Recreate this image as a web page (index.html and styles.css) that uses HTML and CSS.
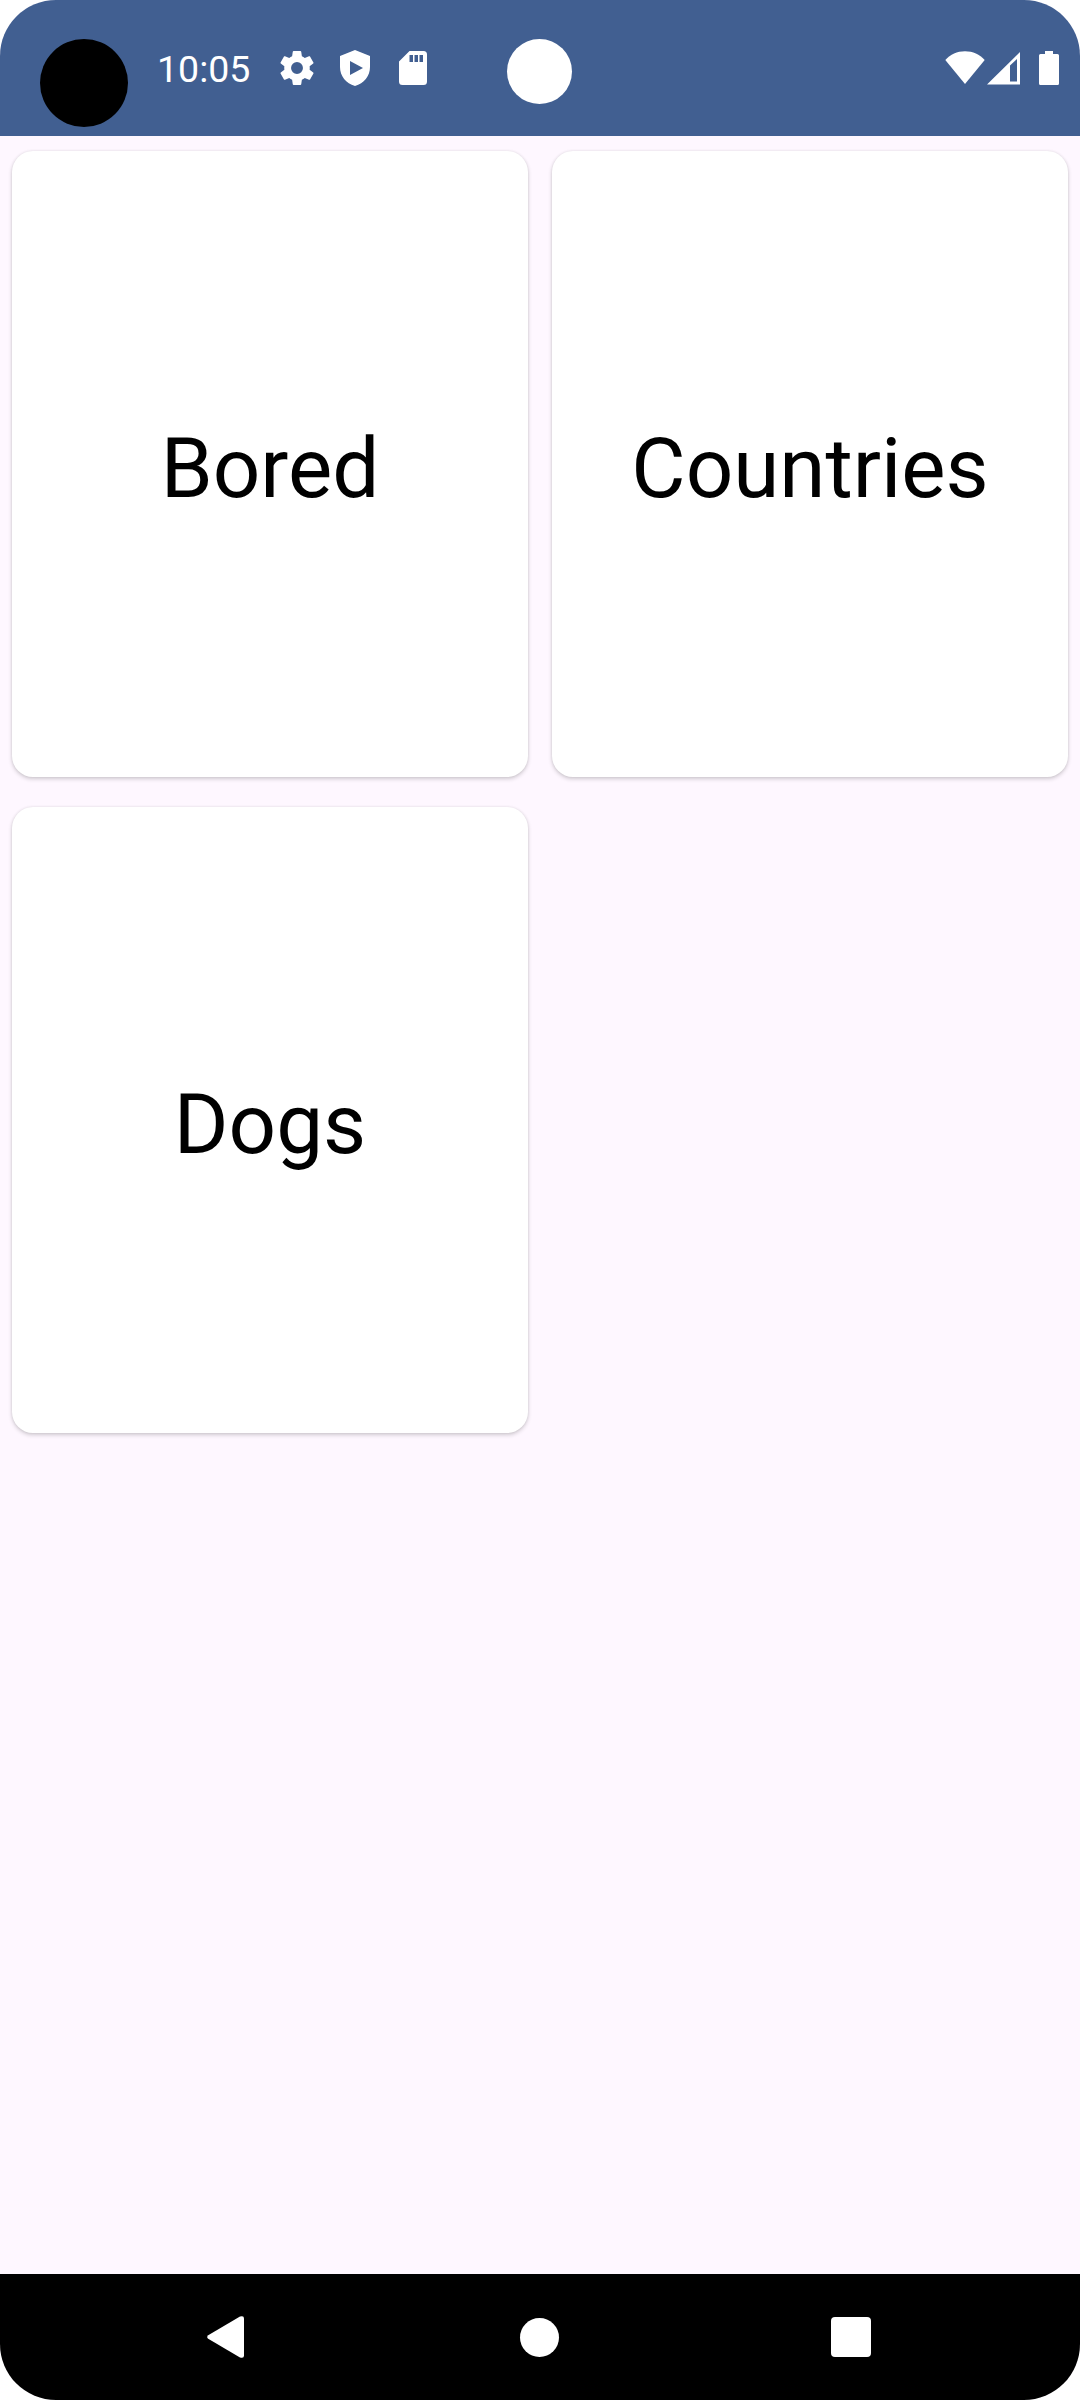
FILE: index.html
```html
<!DOCTYPE html>
<html lang="en">
<head>
<meta charset="utf-8">
<title>Home</title>
<link rel="stylesheet" href="styles.css">
</head>
<body>
<div class="screen">
  <header class="status">
    <span class="camera"></span>
    <span class="time">10:05</span>
    <svg class="gear" width="34" height="34" viewBox="2 2 20 20"><path fill-rule="evenodd" d="M19.5 12c0-.34-.03-.66-.07-.98l2.11-1.65c.19-.15.24-.42.12-.64l-2-3.46c-.12-.22-.39-.3-.61-.22l-2.49 1c-.52-.4-1.08-.73-1.69-.98l-.38-2.65C14.46 2.18 14.25 2 14 2h-4c-.25 0-.46.18-.49.42l-.38 2.65c-.61.25-1.17.59-1.69.98l-2.49-1c-.23-.09-.49 0-.61.22l-2 3.460c-.13.22-.07.49.12.64l2.110 1.650c-.04.32-.07.65-.07.98s.03.66.07.98l-2.110 1.650c-.19.15-.24.42-.12.64l2 3.460c.12.22.39.3.61.22l2.490-1c.52.4 1.080.73 1.690.98l.38 2.650c.03.24.24.42.49.42h4c.25 0 .46-.18.49-.42l.38-2.650c.61-.25 1.170-.59 1.690-.98l2.490 1c.23.09.49 0 .61-.22l2-3.460c.12-.22.07-.49-.12-.64l-2.110-1.650c.04-.32.07-.64.07-.98zM12 15.500a3.500 3.500 0 1 1 0-7 3.500 3.500 0 0 1 0 7z"/></svg>
    <svg class="shield" width="30" height="36" viewBox="0 0 30 36"><path fill-rule="evenodd" d="M15 0 30 6v11c0 9-6 16.500-15 19C6 33.500 0 26 0 17V6zM10 11v14l13-7z"/></svg>
    <svg class="card-icon" width="28" height="34" viewBox="0 0 28 34"><path fill-rule="evenodd" d="M10.500 0H24.500Q28 0 28 3.500V30.500Q28 34 24.500 34H3.500Q0 34 0 30.500V10.500zM10.500 4v7h3.500V4zM15.500 4v7h3.500V4zM20.500 4v7h3.500V4z"/></svg>
    <span class="dot"></span>
    <svg class="wifi" width="40" height="34" viewBox="0 0 40 34"><path d="M20 33 .3 9C5.500 3 12 .2 20 .2S34.500 3 39.700 9z"/></svg>
    <svg class="signal" width="33" height="33" viewBox="0 0 33 33"><path fill-rule="evenodd" d="M0 32.500 33 0V32.500zM23 13.500V29.500H30V7z"/></svg>
    <svg class="battery" width="20" height="34" viewBox="0 0 20 34"><path d="M6 0h8v3h4.500Q20 3 20 4.500V32.500Q20 34 18.500 34H1.500Q0 34 0 32.500V4.500Q0 3 1.500 3H6z"/></svg>
  </header>
  <main class="grid">
    <div class="card">Bored</div>
    <div class="card">Countries</div>
    <div class="card">Dogs</div>
  </main>
  <nav class="nav">
    <svg class="back" width="37" height="42" viewBox="0 0 37 42"><path d="M1.200 19.200 33 .6Q37-.8 37 2.500V39.500Q37 42.800 33 41.400L1.200 22.800Q-.8 21 1.200 19.200z"/></svg>
    <span class="home"></span>
    <span class="recent"></span>
  </nav>
</div>
</body>
</html>
```
FILE: styles.css
```css
body {
  margin: 0;
  background: #fff;
  font-family: Roboto, sans-serif;
}

.screen {
  display: flex;
  flex-direction: column;
  height: 2400px;
  border-radius: 56px;
  overflow: hidden;
  background: #fef7ff;
}

svg {
  display: block;
  flex: none;
  fill: #fff;
}

.status {
  display: flex;
  align-items: center;
  box-sizing: border-box;
  height: 136px;
  padding: 0 21px 0 40px;
  background: #415f91;
}

.camera {
  width: 88px;
  height: 88px;
  margin-top: 30px;
  border-radius: 50%;
  background: #000;
}

.time {
  width: 95px;
  margin-left: 29px;
  margin-top: 1px;
  font-size: 37.5px;
  line-height: 44px;
  color: #fff;
}

.gear { margin-left: 28px; }
.shield { margin-left: 26px; }
.card-icon { margin-left: 29px; }

.dot {
  width: 65px;
  height: 65px;
  margin-top: 7px;
  margin-left: 80px;
  border-radius: 50%;
  background: #fff;
}

.wifi { margin-left: auto; }
.signal { margin-left: 2px; }
.battery { margin-left: 19px; }

.grid {
  display: grid;
  grid-template-columns: 1fr 1fr;
  grid-auto-rows: 626px;
  gap: 30px 24px;
  flex: 1;
  padding: 15px 12px;
}

.card {
  display: flex;
  align-items: center;
  justify-content: center;
  box-sizing: border-box;
  padding: 8px 0 0;
  border-radius: 21px;
  background: #fff;
  box-shadow: 0 2px 4px rgba(0, 0, 0, 0.18), 0 0 3px rgba(0, 0, 0, 0.08);
  font-size: 83.5px;
  color: #000;
}

.nav {
  display: flex;
  align-items: center;
  box-sizing: border-box;
  height: 126px;
  padding-left: 207px;
  background: #000;
}

.home {
  width: 39px;
  height: 39px;
  margin-left: 276px;
  border-radius: 50%;
  background: #fff;
}

.recent {
  width: 40px;
  height: 40px;
  margin-left: 272px;
  border-radius: 4px;
  background: #fff;
}
```
